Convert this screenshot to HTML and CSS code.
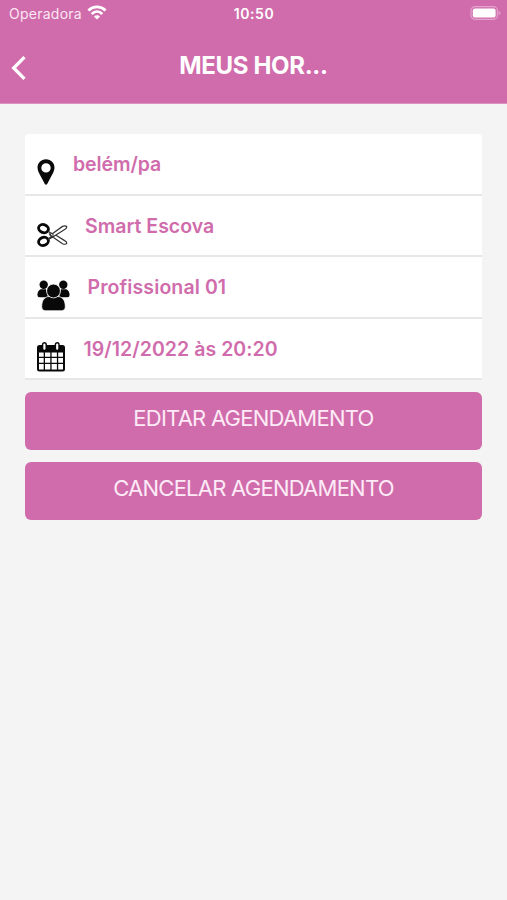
FILE: index.html
```html
<!DOCTYPE html>
<html lang="pt-BR">
<head>
<meta charset="utf-8">
<title>Meus horários</title>
<link rel="stylesheet" href="styles.css">
</head>
<body>
<header class="header">
  <div class="status">
    <div class="carrier"><span class="carrier-name">Operadora</span>
      <svg class="wifi" width="20" height="15" viewBox="0 0 20 15"><g fill="none" stroke="#fff" stroke-width="2.8"><path d="M1.400 5.400C6.300.8 13.700.8 18.600 5.400"/><path d="M4.700 9C7.800 5.900 12.200 5.900 15.300 9"/></g><path fill="#fff" d="M10 14.600 6.900 11.500Q10 8.800 13.100 11.500Z"/></svg>
    </div>
    <span class="time">10:50</span>
    <svg class="battery" width="31" height="14" viewBox="0 0 31 14"><rect x="1" y=".7" width="26.400" height="12.600" rx="3.800" fill="none" stroke="#e3a3ca" stroke-width="1.200"/><rect x="2.800" y="2.400" width="22.800" height="9.200" rx="2.200" fill="#fff"/><path fill="#e49cc8" d="M28.600 4.700Q30.600 5.400 30.600 7T28.600 9.300Z"/></svg>
  </div>
  <nav class="nav">
    <svg class="back" width="16" height="26" viewBox="0 0 16 26"><path d="M13.500 2.200 2.700 13l10.800 10.800" fill="none" stroke="#fff" stroke-width="3.300"/></svg>
    <h1 class="title">MEUS HOR...</h1>
  </nav>
</header>
<main class="content">
  <ul class="card">
    <li class="row">
      <svg class="icon pin" width="18" height="26" viewBox="0 0 18 26"><path fill="#090909" fill-rule="evenodd" d="M9 .2C4 .2.5 3.900.5 8.600c0 3.500 2 6.300 4 10.200L7.700 24.800Q9 26.800 10.300 24.800L13.500 18.800c2-3.900 4-6.700 4-10.200C17.500 3.900 14 .2 9 .2ZM9 4.200a4.700 4.700 0 1 1 0 9.400 4.700 4.700 0 0 1 0-9.400Z"/></svg>
      <span class="label place">belém/pa</span>
    </li>
    <li class="row">
      <svg class="icon scissors" width="31" height="24" viewBox="0 0 31 24"><g fill="none" stroke="#090909"><ellipse cx="6.500" cy="5.600" rx="5" ry="4" transform="rotate(20 6.500 5.600)" stroke-width="2.800"/><ellipse cx="6.500" cy="18.400" rx="5" ry="4" transform="rotate(-20 6.500 18.400)" stroke-width="2.800"/><g stroke="#333"><path stroke-width="1.200" d="M11 8.200 15.300 10.700 25.500 3.400q3.200-1.300 4.300.5-.2 1.800-2.200 2.600L17 13.200 11 16.700M11 15.700l4-2.200 10.500 7.200q3.200 1.300 4.300-.5-.2-1.800-2.200-2.600L19 12.300M12 10.500l3 3"/><circle cx="14.700" cy="12" r="1.600" stroke-width=".9"/></g></g></svg>
      <span class="label service">Smart Escova</span>
    </li>
    <li class="row">
      <svg class="icon people" width="33" height="31" viewBox="0 0 33 31"><g fill="#090909"><circle cx="6.700" cy="4.700" r="4.200"/><circle cx="26.300" cy="4.700" r="4.200"/><path d="M3.600 9.300H9l2 8H2.500Q.4 17.200.4 15C.4 12.500 1.500 10.300 3.600 9.300ZM29.400 9.300H24l-2 8h8.500q2.100-.1 2.100-2.300c0-2.500-1.100-4.700-3.200-5.700Z"/><path stroke="#fff" stroke-width=".8" d="M10.800 16.600h11.400c4.300 1.200 6.100 4.900 6.100 10 0 3-1.600 4.200-4 4.200H8.700c-2.400 0-4-1.200-4-4.200 0-5.100 1.800-8.800 6.100-10Z"/><circle cx="16.500" cy="11" r="6.900" stroke="#fff" stroke-width=".8"/></g></svg>
      <span class="label staff">Profissional 01</span>
    </li>
    <li class="row">
      <svg class="icon calendar" width="28" height="30" viewBox="0 0 28 30"><path fill="#090909" fill-rule="evenodd" d="M2.500 3H25.500Q28 3 28 5.500V27Q28 29.500 25.500 29.500H2.500Q0 29.500 0 27V5.500Q0 3 2.500 3ZM2 10.500v4.300h4.700v-4.300Zm6 0v4.300h5.300v-4.300Zm6.600 0v4.300h5.300v-4.300Zm6.600 0v4.300H26v-4.300ZM2 16.100v4.700h4.700v-4.700Zm6 0v4.700h5.300v-4.700Zm6.600 0v4.700h5.300v-4.700Zm6.600 0v4.700H26v-4.700ZM2 22.100v4.800q0 .6.600.6h4.100v-5.400Zm6 0v5.400h5.300v-5.400Zm6.600 0v5.400h5.300v-5.400Zm6.600 0v5.400h4.200q.6 0 .6-.6v-4.800Z"/><g fill="#fff" stroke="#090909" stroke-width="1.400"><rect x="5.600" y=".8" width="3.600" height="7.700" rx="1.800"/><rect x="18.400" y=".8" width="3.600" height="7.700" rx="1.800"/></g></svg>
      <span class="label date">19/12/2022 às 20:20</span>
    </li>
  </ul>
  <button class="action edit">EDITAR AGENDAMENTO</button>
  <button class="action cancel">CANCELAR AGENDAMENTO</button>
</main>
</body>
</html>
```
FILE: styles.css
```css
* { box-sizing: border-box; }
body {
  margin: 0;
  min-height: 100vh;
  background: #f4f4f4;
  font-family: Inter, "Liberation Sans", sans-serif;
}
.header {
  height: 104px;
  background: #d06cac;
  border-bottom: 1px solid #dc91c0;
  color: #fff;
}
.status {
  height: 28px;
  padding: 0 6px 0 9px;
  display: grid;
  grid-template-columns: 1fr auto 1fr;
  align-items: center;
}
.carrier { display: flex; align-items: center; gap: 5px; }
.carrier-name { font-size: 14px; line-height: 20px; color: #fbe6f3; letter-spacing: .25px; }
.wifi { margin-top: -3px; }
.time { font-size: 14px; line-height: 20px; font-weight: 600; letter-spacing: .6px; margin-right: 2px; }
.battery { justify-self: end; margin-top: -2px; }
.nav {
  height: 75px;
  padding: 0 11px;
  display: grid;
  grid-template-columns: 16px 1fr 16px;
  align-items: center;
}
.back { margin-top: 5px; }
.title {
  margin: 0;
  font-size: 24px;
  line-height: 30px;
  font-weight: 650;
  letter-spacing: -.35px;
  text-align: center;
}
.content { padding: 30px 25px; }
.card {
  margin: 0 0 12px;
  padding: 0;
  list-style: none;
  background: #fff;
  border-radius: 4px 4px 0 0;
}
.row {
  height: 61.5px;
  padding-left: 12px;
  display: flex;
  align-items: flex-start;
  border-bottom: 2px solid #e7e7e7;
}
.icon { flex: none; }
.pin { margin-top: 25px; }
.scissors { margin-top: 27px; }
.people { margin-top: 22.5px; }
.calendar { margin-top: 23px; }
.label {
  margin-top: 18px;
  font-size: 19.5px;
  line-height: 24px;
  font-weight: 600;
  color: #d06cac;
  white-space: nowrap;
}
.place { margin-left: 18px; letter-spacing: -.1px; }
.service { margin-left: 17px; }
.staff { margin-left: 17.5px; letter-spacing: .1px; }
.date { margin-left: 18.5px; letter-spacing: .05px; }
.action {
  display: block;
  width: 100%;
  height: 58px;
  margin: 0 0 12px;
  padding: 0 0 6px;
  border: 0;
  border-radius: 6px;
  background: #d06cac;
  color: #fdeaf6;
  font-family: inherit;
  font-size: 22px;
  line-height: 28px;
  letter-spacing: -.75px;
}
```
